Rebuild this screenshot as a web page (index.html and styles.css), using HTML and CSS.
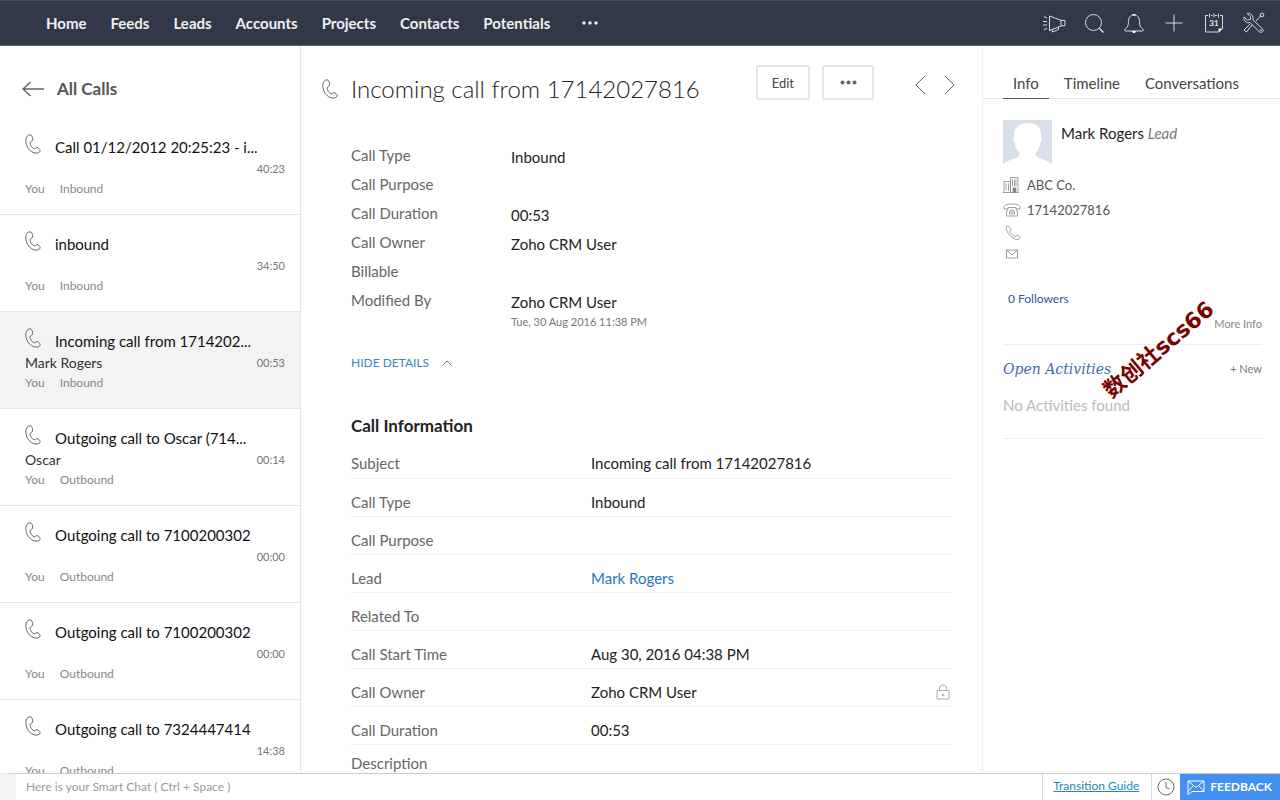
FILE: index.html
```html
<!DOCTYPE html>
<html lang="en">
<head>
    <meta charset="utf-8">
    <title>Incoming call from 17142027816</title>
    <link rel="stylesheet" href="styles.css">
</head>
<body>
    <svg class="defs" width="0" height="0">
        <symbol id="phone" viewBox="0 0 16 20">
            <path d="M5 .8C2.400 .8.800 3.500.800 6.500c0 6 4 11.500 9.200 12.500 2.800.5 5.200-.8 5.200-2.200 0-1.300-2-3.200-3.200-3.200-1.300 0-1.700 1.700-3 1.200C7 14 5 11 5 9c0-1.500 2.300-1.500 2.600-3C7.900 4 7 .8 5 .8z"/>
        </symbol>
    </svg>

    <header class="topbar">
        <nav class="menu">
            <a href="#">Home</a>
            <a href="#">Feeds</a>
            <a href="#">Leads</a>
            <a href="#">Accounts</a>
            <a href="#">Projects</a>
            <a href="#">Contacts</a>
            <a href="#">Potentials</a>
            <button class="more" aria-label="More tabs"><svg width="16" height="4" viewBox="0 0 16 4"><circle cx="2" cy="2" r="1.700"/><circle cx="8" cy="2" r="1.700"/><circle cx="14" cy="2" r="1.700"/></svg></button>
        </nav>
        <div class="tools">
            <button aria-label="Announcements"><svg width="24" height="24" viewBox="0 0 24 24"><path d="M7.500 5v14.500L19 15l4-.5v-5L19 9.300zM19 9.300V15M10 18.500l.5 2.500 6-2.500v-2.500M2 5.500l3 1.500M1 10.500h4M1 14h4M2 19l3-1.800"/></svg></button>
            <button aria-label="Search"><svg width="24" height="24" viewBox="0 0 24 24"><circle cx="11.500" cy="11.500" r="8"/><path d="M17.500 17.500l4 4" stroke-width="1.600"/></svg></button>
            <button aria-label="Notifications"><svg width="24" height="24" viewBox="0 0 24 24"><path d="M12 4c-4 0-5.500 3-5.500 6.500 0 4-1 6-3.300 7.500-1 .8-.5 2 .5 2h16.600c1 0 1.500-1.200.5-2-2.300-1.500-3.300-3.500-3.300-7.500C17.500 7 16 4 12 4z"/><path class="solid" d="M10.500 3h3v1.500h-3zM10 20h4l-1 2h-2z"/></svg></button>
            <button aria-label="Add"><svg width="24" height="24" viewBox="0 0 24 24"><path d="M12 3.500v17M3.500 12h17"/></svg></button>
            <button aria-label="Calendar"><svg width="24" height="24" viewBox="0 0 24 24"><path d="M6 4.500H3.500v16.500H17l3.500-3.500v-13H18M9 4.500h1.500M13 4.500h2M7.500 2.500v4M12 2.500v4M16.500 2.500v4"/><path class="solid" d="M16.500 21v-3.500h4z"/><text x="12" y="15">31</text></svg></button>
            <button aria-label="Setup"><svg width="24" height="24" viewBox="0 0 24 24"><path d="M5 2.500l3.500 3v3L5.500 9 2 6c-.5 4 2.500 6.500 6 5.500l9.500 9.500c2 1.500 4.500-.8 3.200-3L11 9c.8-4-2-7.500-6-6.500zM14 10l5-5.500M10 14l-5.500 7-2.500-2 6-5.800"/><circle cx="20" cy="4" r="1.800"/><circle cx="18.800" cy="19.300" r=".6"/></svg></button>
        </div>
    </header>

    <div class="page">
        <aside class="calls">
            <a class="back" href="#">
                <svg width="22" height="16" viewBox="0 0 22 16"><path d="M8.500 1L1 8l7.500 7M1 8h21" stroke-width="1.400"/></svg>
                All Calls
            </a>
            <ul class="list">
                <li class="call">
                    <svg class="phone"><use href="#phone"/></svg>
                    <a class="subject" href="#">Call 01/12/2012 20:25:23 - i...</a>
                    <span class="who"></span><span class="time">40:23</span>
                    <span class="meta"><span>You</span><span>Inbound</span></span>
                </li>
                <li class="call">
                    <svg class="phone"><use href="#phone"/></svg>
                    <a class="subject" href="#">inbound</a>
                    <span class="who"></span><span class="time">34:50</span>
                    <span class="meta"><span>You</span><span>Inbound</span></span>
                </li>
                <li class="call selected">
                    <svg class="phone"><use href="#phone"/></svg>
                    <a class="subject" href="#">Incoming call from 1714202...</a>
                    <span class="who">Mark Rogers</span><span class="time">00:53</span>
                    <span class="meta"><span>You</span><span>Inbound</span></span>
                </li>
                <li class="call">
                    <svg class="phone"><use href="#phone"/></svg>
                    <a class="subject" href="#">Outgoing call to Oscar (714...</a>
                    <span class="who">Oscar</span><span class="time">00:14</span>
                    <span class="meta"><span>You</span><span>Outbound</span></span>
                </li>
                <li class="call">
                    <svg class="phone"><use href="#phone"/></svg>
                    <a class="subject" href="#">Outgoing call to 7100200302</a>
                    <span class="who"></span><span class="time">00:00</span>
                    <span class="meta"><span>You</span><span>Outbound</span></span>
                </li>
                <li class="call">
                    <svg class="phone"><use href="#phone"/></svg>
                    <a class="subject" href="#">Outgoing call to 7100200302</a>
                    <span class="who"></span><span class="time">00:00</span>
                    <span class="meta"><span>You</span><span>Outbound</span></span>
                </li>
                <li class="call">
                    <svg class="phone"><use href="#phone"/></svg>
                    <a class="subject" href="#">Outgoing call to 7324447414</a>
                    <span class="who"></span><span class="time">14:38</span>
                    <span class="meta"><span>You</span><span>Outbound</span></span>
                </li>
            </ul>
        </aside>

        <main class="detail">
            <div class="title">
                <svg class="phone"><use href="#phone"/></svg>
                <h1>Incoming call from 17142027816</h1>
                <div class="actions">
                    <button class="btn">Edit</button>
                    <button class="btn" aria-label="More actions"><svg width="17" height="5" viewBox="0 0 17 5"><circle cx="2.500" cy="2.500" r="2"/><circle cx="8.500" cy="2.500" r="2"/><circle cx="14.500" cy="2.500" r="2"/></svg></button>
                    <button class="step" aria-label="Previous"><svg width="12" height="20" viewBox="0 0 12 20"><path d="M11 1L2 10l9 9"/></svg></button>
                    <button class="step" aria-label="Next"><svg width="12" height="20" viewBox="0 0 12 20"><path d="M1 1l9 9-9 9"/></svg></button>
                </div>
            </div>

            <dl class="summary">
                <dt>Call Type</dt><dd>Inbound</dd>
                <dt>Call Purpose</dt><dd></dd>
                <dt>Call Duration</dt><dd>00:53</dd>
                <dt>Call Owner</dt><dd>Zoho CRM User</dd>
                <dt>Billable</dt><dd></dd>
                <dt>Modified By</dt><dd>Zoho CRM User<small>Tue, 30 Aug 2016 11:38 PM</small></dd>
            </dl>

            <button class="toggle">HIDE DETAILS
                <svg width="10" height="6" viewBox="0 0 10 6"><path d="M.5 5.500L5 1l4.500 4.500"/></svg>
            </button>

            <h2>Call Information</h2>
            <table class="info">
                <tr><th>Subject</th><td>Incoming call from 17142027816</td><td></td></tr>
                <tr><th>Call Type</th><td>Inbound</td><td></td></tr>
                <tr><th>Call Purpose</th><td></td><td></td></tr>
                <tr><th>Lead</th><td><a href="#">Mark Rogers</a></td><td></td></tr>
                <tr><th>Related To</th><td></td><td></td></tr>
                <tr><th>Call Start Time</th><td>Aug 30, 2016 04:38 PM</td><td></td></tr>
                <tr><th>Call Owner</th><td>Zoho CRM User</td><td class="lock"><svg width="14" height="16" viewBox="0 0 14 16"><path d="M1 6.500h12v8.500H1zM3.500 6.500V4c0-4 7-4 7 0v2.500"/><circle cx="7" cy="11" r=".8"/></svg></td></tr>
                <tr><th>Call Duration</th><td>00:53</td><td></td></tr>
                <tr><th>Description</th><td></td><td></td></tr>
            </table>
        </main>

        <aside class="side">
            <nav class="tabs">
                <a class="active" href="#">Info</a>
                <a href="#">Timeline</a>
                <a href="#">Conversations</a>
            </nav>
            <section class="card">
                <div class="person">
                    <svg width="49" height="46" viewBox="0 0 49 46"><path fill="#d8deea" d="M0 0h49v44c-3-3-8-4-13-6-3-1-4-3-3-6 3-3 4-6 4-9 2-1 2-5 1-7C39 8 34 3 25 3S10 8 11 16c-1 2-1 6 1 7 0 3 1 6 4 9 1 3 0 5-3 6-5 2-10 3-13 6z"/></svg>
                    <p>Mark Rogers <em>Lead</em></p>
                </div>
                <ul class="contact">
                    <li><svg width="18" height="16" viewBox="0 0 18 16"><path d="M1 15.500V4.500h6.500v11M7.500 15.500V.5H15v15M0 15.500h16M3 6.500v7M5.500 6.500v7M9.500 2.500v7M11.500 2.500v7M13 2.500v7"/><path class="solid" d="M10 11h3v4.500h-3z"/></svg>ABC Co.</li>
                    <li><svg width="18" height="16" viewBox="0 0 18 16"><path d="M1 7C0 3.500 4 2 9 2s9 1.500 8 5h-4V5.500H5V7zM5 7l-1.500 3v4h11v-4L13 7M6.500 12V9.500L8 8h2l1.500 1.500V12zM7 10h4"/></svg>17142027816</li>
                    <li class="short"><svg width="18" height="16" viewBox="0 0 18 16"><path d="M4 1C2.500 2 3 5 5 8s6 6.500 9 6.500c1.500 0 3-1 3-2s-2-2.500-3-2.300-1 1.500-2 1.200C10 11 7 8 6.800 6.700 6.600 5.500 8 5.500 8 4.500 8 3.500 5.500.5 4 1z"/></svg></li>
                    <li class="short"><svg width="18" height="16" viewBox="0 0 18 16"><path d="M3.500 4h11v8h-11zM3.500 4L9 9l5.500-5"/></svg></li>
                </ul>
                <a class="followers" href="#">0 Followers</a>
                <a class="moreinfo" href="#">More Info</a>
            </section>
            <section class="activities">
                <div class="heading">
                    <h3>Open Activities</h3>
                    <a href="#">+ New</a>
                </div>
                <p>No Activities found</p>
            </section>
            <span class="stamp">数创社scs66</span>
        </aside>
    </div>

    <footer class="bottom">
        <input class="chat" type="text" aria-label="Smart Chat" placeholder="Here is your Smart Chat ( Ctrl + Space )">
        <a class="guide" href="#">Transition Guide</a>
        <button class="recent" aria-label="Recent items"><svg width="18" height="18" viewBox="0 0 18 18"><circle cx="9" cy="9" r="8"/><path d="M9 4v5.500l3.500 1.500"/></svg></button>
        <button class="feedback"><svg width="18" height="16" viewBox="0 0 18 16"><path d="M1 2h16v10.500H5L1 15.500zM1 2l8 6.500L17 2M1 12.500L6 7M17 12.500L12 7"/></svg>FEEDBACK</button>
    </footer>
</body>
</html>
```
FILE: styles.css
```css
*{
    box-sizing: border-box;
}
body{
    margin: 0;
    height: 100vh;
    display: flex;
    flex-direction: column;
    overflow: hidden;
    font-family: Lato, "Liberation Sans", sans-serif;
    font-size: 15px;
    line-height: 20px;
    color: #222;
    background: #fff;
}
h1, h2, h3, p, ul, dl, dd{
    margin: 0;
    padding: 0;
}
ul{
    list-style: none;
}
a{
    color: inherit;
    text-decoration: none;
}
button{
    font: inherit;
    color: inherit;
    background: none;
    border: 0;
    padding: 0;
    cursor: pointer;
}
svg{
    display: block;
    flex: none;
    fill: none;
    stroke: #666;
}
.defs{
    position: absolute;
}
.phone{
    width: 16px;
    height: 20px;
}

/* top bar */
.topbar{
    display: flex;
    justify-content: space-between;
    align-items: center;
    height: 46px;
    flex: none;
    padding: 0 14px 0 46px;
    background: #313949;
    border-top: 1px solid #434b5c;
    border-bottom: 1px solid #5a6170;
}
.menu{
    display: flex;
    align-items: center;
    gap: 24px;
    font-weight: bold;
    color: #f0f0f2;
}
.more{
    margin-left: 8px;
}
.more svg{
    fill: #f0f0f2;
    stroke: none;
}
.tools{
    display: flex;
    gap: 16px;
}
.tools svg{
    stroke: #d8dbe0;
    stroke-width: 1;
}
.tools .solid{
    fill: #fff;
    stroke: none;
}
.tools text{
    font-size: 8px;
    font-weight: bold;
    text-anchor: middle;
    fill: #e8eaee;
    stroke: none;
}

.page{
    display: flex;
    flex: 1;
    min-height: 0;
}

/* list of calls */
.calls{
    width: 301px;
    flex: none;
    overflow: hidden;
    border-right: 1px solid #e8e8e8;
}
.back{
    display: flex;
    align-items: center;
    gap: 13px;
    height: 72px;
    padding: 14px 22px 0;
    font-size: 17px;
    font-weight: bold;
    color: #555;
}
.call{
    display: grid;
    grid-template-columns: 30px 1fr auto;
    grid-template-rows: 22px 22px 18px;
    align-items: center;
    align-content: start;
    height: 97px;
    padding: 18px 15px 0 25px;
    border-bottom: 1px solid #e8e8e8;
}
.call .phone{
    margin-bottom: 6px;
}
.selected{
    background: #f3f3f3;
}
.subject{
    grid-column: 2 / 4;
    color: #111;
    white-space: nowrap;
}
.who{
    grid-column: 1 / 3;
    font-size: 14px;
    color: #333;
}
.time{
    font-size: 11px;
    color: #777;
}
.meta{
    grid-column: 1 / 4;
    display: flex;
    gap: 15px;
    font-size: 12px;
    color: #888;
}

/* record */
.detail{
    flex: 1;
    min-width: 0;
    overflow: hidden;
    padding: 19px 30px 0 21px;
}
.title{
    display: flex;
    align-items: center;
    height: 48px;
}
h1{
    flex: 1;
    margin-left: 13px;
    font-size: 24px;
    font-weight: 300;
    line-height: 32px;
    white-space: nowrap;
}
.actions{
    display: flex;
    align-items: center;
    align-self: flex-start;
}
.btn{
    display: flex;
    align-items: center;
    justify-content: center;
    height: 35px;
    min-width: 52px;
    padding: 0 14px;
    margin-right: 12px;
    font-size: 13px;
    border: 2px solid #e4e4e4;
    border-radius: 3px;
    color: #444;
}
.btn svg{
    fill: #666;
    stroke: none;
}
.step{
    margin-left: 18px;
    padding-top: 4px;
}
.btn + .step{
    margin-left: 28px;
}
.actions .step:last-child{
    margin-right: -4px;
}
.summary{
    display: grid;
    grid-template-columns: 160px 1fr;
    grid-auto-rows: 29px;
    margin: 32px 0 0 29px;
}
.summary dt{
    color: #666;
}
.summary dd{
    padding-top: 2px;
}
.summary small{
    display: block;
    font-size: 11px;
    color: #777;
}
.toggle{
    display: flex;
    align-items: center;
    gap: 13px;
    margin: 34px 0 0 29px;
    font-size: 12px;
    color: #3a86c8;
}
.toggle svg{
    stroke: #3a86c8;
}
h2{
    margin: 43px 0 0 29px;
    font-size: 17px;
    font-weight: bold;
    line-height: 20px;
}
.info{
    width: calc(100% - 29px);
    margin: 4px 0 0 29px;
    border-collapse: collapse;
    table-layout: fixed;
}
.info th, .info td{
    height: 38px;
    padding: 9px 0 0;
    border-bottom: 1px solid #efefef;
    font-weight: normal;
    text-align: left;
}
/* the last row runs up to the chat bar */
.info tr:last-child th, .info tr:last-child td{
    height: 32px;
    padding-top: 6px;
    line-height: 18px;
    border-bottom: 0;
}
.info th{
    width: 240px;
    color: #666;
}
.info td:last-child{
    width: 16px;
}
.info a{
    color: #1f74c8;
}
.lock svg{
    stroke: #aaa;
}

/* right side */
.side{
    position: relative;
    width: 298px;
    flex: none;
    border-left: 1px solid #eee;
}
.tabs{
    display: flex;
    gap: 5px;
    height: 53px;
    padding: 27px 20px 0;
    border-bottom: 1px solid #e8e8e8;
    color: #444;
}
.tabs a{
    padding: 0 10px;
}
.tabs .active{
    height: 26px;
    border-bottom: 1px solid #555;
}
.card, .activities{
    margin: 0 18px 0 20px;
    border-bottom: 1px solid #eee;
}
.card{
    display: flex;
    flex-direction: column;
    padding: 21px 0 10px;
}
.person{
    display: flex;
    gap: 9px;
}
.person svg{
    stroke: none;
}
.person p{
    padding-top: 3px;
}
.person em{
    font-size: 15px;
    color: #777;
}
.contact{
    margin-top: 6px;
    font-size: 13px;
    color: #555;
}
.contact li{
    display: flex;
    align-items: center;
    gap: 6px;
    height: 25px;
}
.contact .short{
    height: 21px;
}
.contact svg{
    stroke: #888;
    stroke-width: .8;
}
.contact .solid{
    fill: #888;
}
.followers{
    margin: 25px 0 0 5px;
    font-size: 12px;
    color: #2f55a0;
}
.moreinfo{
    align-self: flex-end;
    margin-top: 5px;
    font-size: 11px;
    color: #888;
}
.activities{
    height: 94px;
    padding-top: 14px;
}
.heading{
    display: flex;
    justify-content: space-between;
    align-items: center;
}
.heading h3{
    font-family: "DejaVu Serif", serif;
    font-size: 14px;
    font-style: italic;
    font-weight: normal;
    color: #3f6ca5;
}
.heading a{
    font-size: 11px;
    color: #777;
}
.activities p{
    margin-top: 16px;
    color: #bbb;
}
.stamp{
    position: absolute;
    left: 108px;
    top: 292px;
    font-family: "DejaVu Sans", "Noto Sans CJK SC", sans-serif;
    font-size: 22px;
    font-weight: bold;
    line-height: 24px;
    white-space: nowrap;
    color: #7b0000;
    transform: rotate(-40deg);
}

/* bottom bar */
.bottom{
    display: flex;
    height: 27px;
    flex: none;
    border-top: 1px solid #ccc;
    border-left: 16px solid #f3f3f3;
    background: #fff;
}
.chat{
    flex: 1;
    min-width: 0;
    border: 0;
    padding: 0 10px;
    font: inherit;
    font-size: 12px;
}
.chat::placeholder{
    color: #999;
}
.guide{
    padding: 2px 12px 0 10px;
    border-left: 1px solid #ddd;
    border-right: 1px solid #ddd;
    font-size: 12px;
    text-decoration: underline;
    color: #2389bd;
}
.recent{
    padding: 0 5px;
}
.feedback{
    display: flex;
    align-items: center;
    gap: 5px;
    padding: 0 8px 0 7px;
    font-size: 12px;
    font-weight: bold;
    color: #fff;
    background: #4190f2;
}
.feedback svg{
    stroke: #fff;
}
```
